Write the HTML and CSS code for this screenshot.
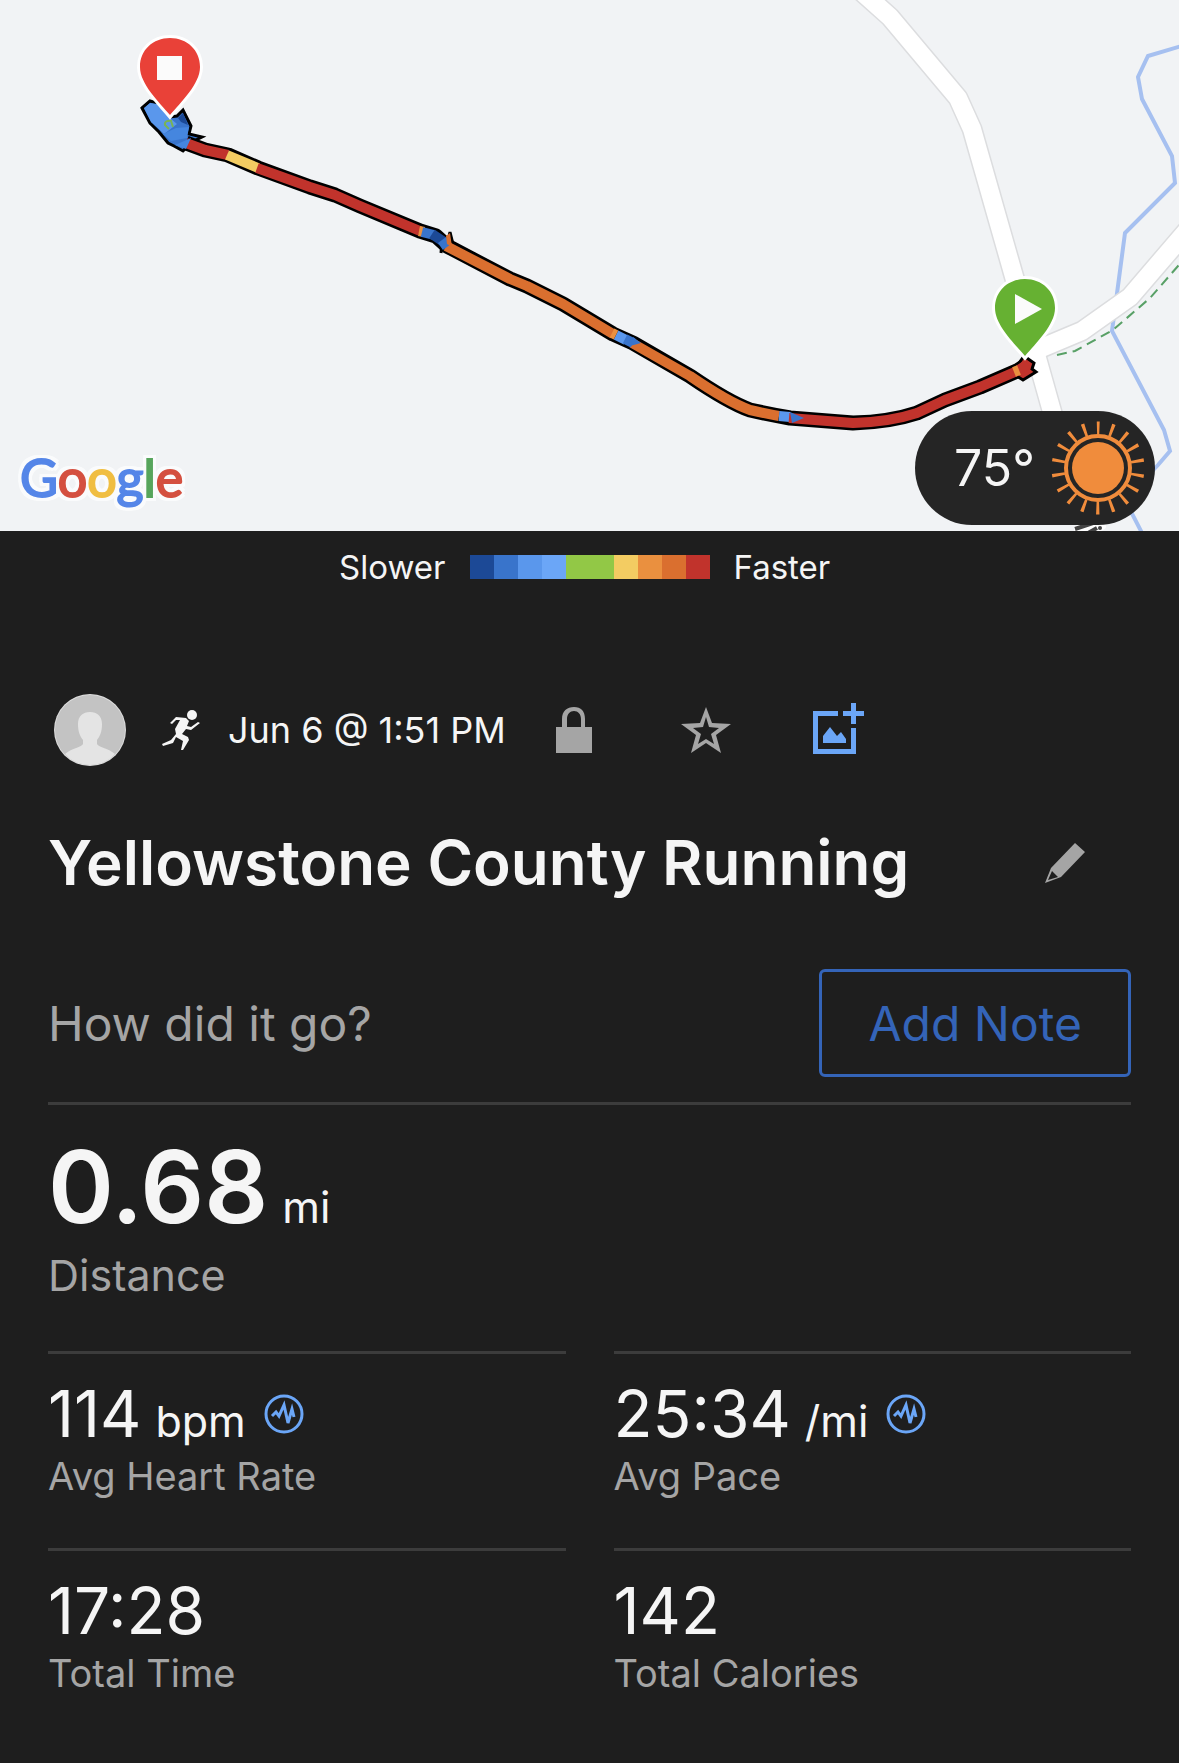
FILE: index.html
```html
<!DOCTYPE html>
<html lang="en">
<head>
<meta charset="utf-8">
<meta name="viewport" content="width=device-width, initial-scale=1">
<title>Yellowstone County Running</title>
<link rel="stylesheet" href="styles.css">
</head>
<body>
<section class="map" aria-label="Route map">
  <svg class="map-canvas" viewBox="0 0 1179 531" preserveAspectRatio="xMidYMid slice" aria-hidden="true">
    <rect width="1179" height="531" fill="#f1f3f5"/>
    <!-- river -->
    <path class="river" d="M1185 45 1148 56 1138 77 1142 99 1172 156 1175 183 1125 233 1112 331 1164 430 1170 451 1158 465 1125 500 1142 533"/>
    <!-- roads -->
    <g class="road-edge"><path d="M862-8 890 17 958 98 972 129 1015 280 1060 440"/><path d="M1032 352 1082 331 1130 297 1190 227"/></g>
    <g class="road"><path d="M862-8 890 17 958 98 972 129 1015 280 1060 440"/><path d="M1032 352 1082 331 1130 297 1190 227"/></g>
    <path class="trail" d="M1057 355 1075 351 1113 330 1150 298 1185 258"/>
    <!-- rotated road label, mostly hidden under the weather pill -->
    <g stroke="#fff" stroke-width="8" stroke-linecap="round"><path d="M1078 529 1091 525M1091 532 1102 526"/></g>
    <g stroke="#444" stroke-width="4"><path d="M1075 529 1093 523M1088 533 1097 528"/></g>
    <circle cx="1100" cy="528" r="2" fill="#444"/>
    <!-- route -->
    <path d="M142 108 150 101 157 103 170 117 177 116 183 110 191 126 189 134 202 137 192 142 183 151 174 146 168 143 159 132 150 123Z" fill="#3974cb" stroke="#000" stroke-width="3"/>
    <path class="line-edge" d="M186 143 205 150 228 155 258 168 310 187 335 195 360 206 420 231 436 236 447 246 510 279 527 286 563 304 613 334 633 343 690 376Q728 402 750 410 768 414 790 418L853 423Q890 422 917 413L945 400 980 387 1017 371 1028 364"/>
    <path d="M447 245 450 232 453 244M442 242 441 253M1024 356 1034 363 1032 369 1036 372 1023 380 1012 373Z" fill="#c1332c" stroke="#000" stroke-width="3"/>
    <g class="line">
      <path stroke="#c1332c" d="M186 143 205 150 228 155"/>
      <path stroke="#f3cc62" d="M227 155 258 168"/>
      <path stroke="#c1332c" d="M257 168 310 187 335 195 360 206 420 231"/>
      <path stroke="#ea903f" d="M419 231 424 232"/>
      <path stroke="#3974cb" d="M422 232 434 235"/>
      <path stroke="#1c4996" d="M432 234 444 242"/>
      <path stroke="#da6f2f" d="M446 246 510 279 527 286 563 304 613 334"/>
      <path stroke="#3974cb" d="M442 240 447 247"/>
      <path stroke="#5a97ec" d="M616 335 626 340"/>
      <path stroke="#ea903f" d="M612 333 616 335"/>
      <path stroke="#da6f2f" d="M632 343 690 376Q728 402 750 410 768 414 779 416"/>
      <path stroke="#3974cb" d="M625 339 633 343"/>
      <path stroke="#5a97ec" d="M779 416 790 417"/>
      <path stroke="#c1332c" d="M789 418 853 423Q890 422 917 413L945 400 980 387 1017 371 1028 364"/>
      <path stroke="#ea903f" d="M1014 372 1019 370"/>
    </g>
    <path d="M633 337 641 343 630 346ZM790 412 804 418 792 423Z" fill="#3974cb"/>
    <path d="M446 236 450 233 452 247 447 244Z" fill="#da6f2f"/>
    <path d="M144 108 150 103 157 104 170 118 177 124 164 134 160 130 151 122Z" fill="#5a97ec"/>
    <path d="M178 118 183 113 188 125 181 122Z" fill="#1c4996"/>
    <path d="M163 134 176 128 189 127 187 138 171 141ZM175 145 191 138 186 149Z" fill="#4586df"/>
    <path d="M172 121q-8-1-7 4l4 4M171 121l2 6" fill="none" stroke="#79b454" stroke-width="2"/>
    <!-- finish and start pins -->
    <g class="pin">
      <path fill="#e94138" d="M170 115C159 102 140 84 140 67 140 50 153 38 170 38S200 50 200 67C200 84 181 102 170 115Z"/>
      <path fill="#66b132" d="M1025 356C1014 343 995 325 995 308 995 291 1008 279 1025 279S1055 291 1055 308C1055 325 1036 343 1025 356Z"/>
    </g>
    <rect x="157" y="56" width="25" height="24" fill="#fbfbfb"/>
    <path fill="#fbfbfb" d="M1015 294V324L1042 309Z"/>
  </svg>
  <a class="google" href="#google" aria-label="Google"><span class="g-blue">G</span><span class="g-red">o</span><span class="g-yellow">o</span><span class="g-blue">g</span><span class="g-green">l</span><span class="g-red">e</span></a>
  <div class="weather">
    <span>75°</span>
    <svg class="sun" viewBox="-48 -48 96 96" aria-hidden="true">
      <circle r="26" fill="#f08c3c"/>
      <circle r="32" fill="none" stroke="#f08c3c" stroke-width="4"/>
      <circle r="40" fill="none" stroke="#f08c3c" stroke-width="13" stroke-dasharray="3 10.963" stroke-dashoffset="1.5" transform="rotate(-90)"/>
    </svg>
  </div>
</section>

<div class="legend">
  <span class="slower">Slower</span>
  <div class="ramp" aria-hidden="true"><i class="c1"></i><i class="c2"></i><i class="c3"></i><i class="c4"></i><i class="c5"></i><i class="c5"></i><i class="c6"></i><i class="c7"></i><i class="c8"></i><i class="c9"></i></div>
  <span>Faster</span>
</div>

<main>
  <div class="meta">
    <svg class="avatar" viewBox="0 0 72 72" role="img" aria-label="Profile">
      <defs><clipPath id="face"><circle cx="36" cy="36" r="35"/></clipPath></defs>
      <circle cx="36" cy="36" r="36" fill="#dedede"/>
      <circle cx="36" cy="36" r="35" fill="#c3c3c3"/>
      <g clip-path="url(#face)"><path fill="#e4e4e4" d="M24 30C24 22 29 18 36 18S48 22 48 30C48 38 46 42 43 46V50C44 53 54 54 61 60L50 71H22L11 60C18 54 28 53 29 50V46C26 42 24 38 24 30Z"/></g>
    </svg>
    <svg class="runner" viewBox="0 0 40 42" aria-hidden="true">
      <circle cx="31" cy="6" r="5" fill="#f5f5f5"/>
      <path fill="#f5f5f5" d="M15 8 25 9 28 12 26 17 30 18 37 13 39 14 30 21 25 20 21 25 27 28 28 31 22 41 20 41 22 32 15 28 12 34 2 37 1 35 10 31 15 25 14 20 19 11 15 11 11 15 9 14Z"/>
    </svg>
    <time class="date">Jun 6 @ 1:51 PM</time>
    <div class="actions">
      <button class="icon-button" type="button" aria-label="Privacy">
        <svg width="36" height="48" viewBox="0 0 36 48"><path fill="#a5a5a5" d="M0 21H6V13C6 5 11 1 18 1S29 5 29 13V21H36V47H0ZM11 21H25V13C25 8 22 5 18 5S11 8 11 13Z" fill-rule="evenodd"/></svg>
      </button>
      <button class="icon-button" type="button" aria-label="Favorite">
        <svg width="50" height="48" viewBox="0 0 50 48"><path fill="#a5a5a5" fill-rule="evenodd" d="M25 1 31 17 50 18 35 29 40 47 25 37 10 47 15 29 0 18 19 17ZM25 11 22 21 12 22 20 28 17 38 25 33 33 38 30 28 38 22 28 21Z"/></svg>
      </button>
      <button class="icon-button" type="button" aria-label="Add photo">
        <svg width="52" height="58" viewBox="0 0 52 58"><path fill="#6ba6f7" d="M1 10H26V15H6V48H39V27H44V53H1ZM39 2H44V10H52V15H44V23H39V15H31V10H39ZM11 35 18 26 25 35 29 31 34 38V42H11Z"/></svg>
      </button>
    </div>
  </div>

  <div class="heading">
    <h1>Yellowstone County Running</h1>
    <button class="icon-button" type="button" aria-label="Edit name">
      <svg width="40" height="40" viewBox="0 0 40 40"><path fill="#a5a5a5" fill-rule="evenodd" d="M30 0 40 9 16 34 0 40 6 25ZM7 28 3 37 13 34Z"/></svg>
    </button>
  </div>

  <div class="note">
    <p>How did it go?</p>
    <button class="add-note" type="button">Add Note</button>
  </div>

  <dl class="stats">
    <div class="stat stat-main">
      <dd><span class="number">0.68</span><span class="unit">mi</span></dd>
      <dt>Distance</dt>
    </div>
    <div class="stat">
      <dd><span class="number">114</span><span class="unit">bpm</span>
        <svg class="pulse" viewBox="0 0 40 40" aria-hidden="true"><circle cx="20" cy="20" r="18"/><path d="M8 22 12 18 15 22 20 11 24 29 28 15 30 23"/></svg></dd>
      <dt>Avg Heart Rate</dt>
    </div>
    <div class="stat">
      <dd><span class="number">25:34</span><span class="unit">/mi</span>
        <svg class="pulse" viewBox="0 0 40 40" aria-hidden="true"><circle cx="20" cy="20" r="18"/><path d="M8 22 12 18 15 22 20 11 24 29 28 15 30 23"/></svg></dd>
      <dt>Avg Pace</dt>
    </div>
    <div class="stat">
      <dd><span class="number">17:28</span></dd>
      <dt>Total Time</dt>
    </div>
    <div class="stat">
      <dd><span class="number">142</span></dd>
      <dt>Total Calories</dt>
    </div>
  </dl>
</main>
</body>
</html>
```
FILE: styles.css
```css
* { box-sizing: border-box; }

body {
  margin: 0;
  background: #1e1e1e;
  color: #f5f5f5;
  font-family: Inter, "Liberation Sans", sans-serif;
}

h1, p, dl, dd { margin: 0; }

svg { display: block; flex: none; }

button {
  padding: 0;
  border: 0;
  background: none;
  font: inherit;
  cursor: pointer;
}

/* Map */
.map { position: relative; }
.map-canvas { width: 100%; height: auto; }
.river { fill: none; stroke: #a6c0f0; stroke-width: 4; }
.road-edge { fill: none; stroke: #dcdddf; stroke-width: 21; stroke-linejoin: round; }
.road { fill: none; stroke: #fff; stroke-width: 18; stroke-linejoin: round; }
.trail { fill: none; stroke: #58a066; stroke-width: 2; stroke-dasharray: 10 6; }
.line-edge { fill: none; stroke: #000; stroke-width: 15; stroke-linejoin: round; }
.line { fill: none; stroke-width: 10; stroke-linejoin: round; }
.pin { stroke: #fff; stroke-width: 6; paint-order: stroke; }

.google {
  position: absolute;
  left: 20px;
  bottom: 24px;
  font: 400 52px/60px Lato, sans-serif;
  text-decoration: none;
  -webkit-text-stroke: 2px currentcolor;
  filter: drop-shadow(3px 0 0 #fafbfc) drop-shadow(-3px 0 0 #fafbfc) drop-shadow(0 3px 0 #fafbfc) drop-shadow(0 -3px 0 #fafbfc);
}
.g-blue { color: #5586e8; }
.g-red { color: #d45040; }
.g-yellow { color: #f0be42; }
.g-green { color: #57a55c; }

.weather {
  position: absolute;
  right: 24px;
  bottom: 6px;
  display: flex;
  align-items: center;
  justify-content: space-between;
  width: 240px;
  height: 114px;
  padding: 0 9px 0 39px;
  border-radius: 57px;
  background: #252525;
  font-size: 50px;
}
.sun { width: 96px; height: 96px; }

/* Pace legend */
.legend {
  display: grid;
  grid-template-columns: 1fr auto 1fr;
  align-items: center;
  gap: 24px;
  padding: 12px 0;
  font-size: 33px;
  line-height: 48px;
}
.slower { text-align: right; }
.ramp { display: flex; }
.ramp i { width: 24px; height: 24px; }
.c1 { background: #1c4996; }
.c2 { background: #3974cb; }
.c3 { background: #5a97ec; }
.c4 { background: #6ba6f7; }
.c5 { background: #92c846; }
.c6 { background: #f3cc62; }
.c7 { background: #ea903f; }
.c8 { background: #da6f2f; }
.c9 { background: #c1332c; }

main { padding: 91px 48px 48px; }

/* Activity header */
.meta {
  display: flex;
  align-items: center;
  padding-left: 6px;
}
.avatar { width: 72px; height: 72px; }
.runner { width: 40px; height: 42px; margin: 0 27px 0 35px; }
.date { font-size: 36px; }
.actions { display: flex; margin-left: 2px; }
.icon-button {
  display: flex;
  align-items: center;
  justify-content: center;
  width: 132px;
  height: 72px;
}

.heading {
  display: flex;
  align-items: center;
  justify-content: space-between;
  margin-top: 57px;
}
h1 {
  font-size: 62px;
  font-weight: 600;
  line-height: 80px;
}

.note {
  display: flex;
  align-items: center;
  justify-content: space-between;
  margin-top: 66px;
  padding-bottom: 25px;
  color: #a5a5a5;
  font-size: 48px;
}
.add-note {
  height: 108px;
  padding: 0 46px;
  border: 3px solid #3464b8;
  border-radius: 6px;
  color: #3464b8;
}

/* Statistics */
.stats {
  display: grid;
  grid-template-columns: 1fr 1fr;
  column-gap: 48px;
}
.stat {
  display: flex;
  flex-direction: column;
  padding: 22px 0 48px;
  border-top: 3px solid #3c3c3c;
}
.stat dd {
  display: flex;
  align-items: baseline;
  font-size: 64px;
  line-height: 76px;
}
.stat dt {
  color: #a5a5a5;
  font-size: 38px;
  line-height: 48px;
}
.stat .unit {
  margin-left: 14px;
  font-size: 43px;
  line-height: 48px;
}
.pulse {
  align-self: center;
  width: 40px;
  height: 40px;
  margin-left: 18px;
  fill: none;
  stroke: #6ba6f7;
  stroke-width: 3;
}
.stat-main { grid-column: 1 / -1; }
.stat-main dd { line-height: 120px; }
.stat-main .number { font-size: 100px; font-weight: 600; }
.stat-main dt { font-size: 43px; line-height: 56px; }
```
